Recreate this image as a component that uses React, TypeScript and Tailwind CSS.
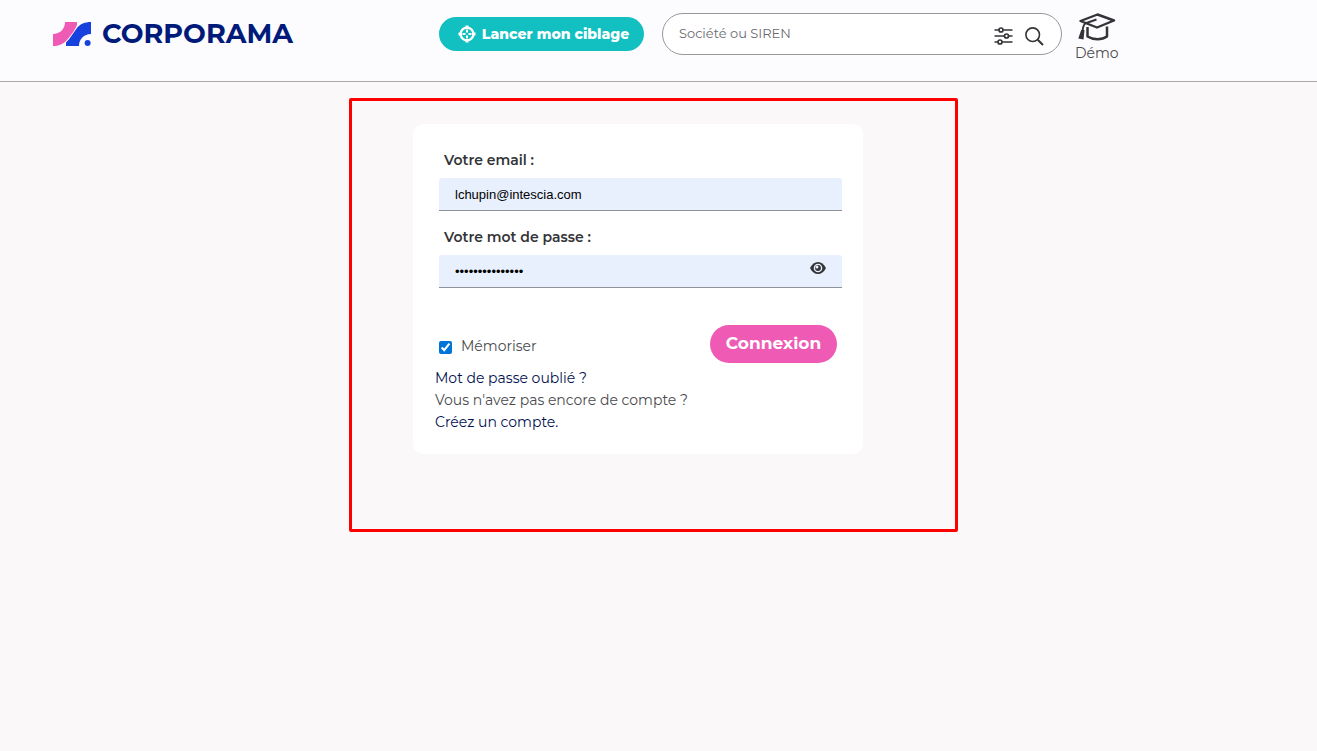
function Logo() {
  return (
    <a href="#" className="flex items-center gap-[11px] text-[27px] leading-8 font-bold text-[#001a7a]">
      <svg width="38" height="24" viewBox="0 0 38 24" aria-hidden="true">
        <path d="M0 12C7 12 12 7 12 0H24V3C22 8 19 12 14 18C10 22 6 24 0 24Z" fill="#ee5ab4" />
        <path d="M13 24V20.5C17 17 20 11 24 6C27 2 32 0 38 0V12C31 12 26 17 26 24Z" fill="#1741dc" />
        <circle cx="34.6" cy="21" r="3" fill="#1741dc" />
      </svg>
      CORPORAMA
    </a>
  );
}

function TargetIcon() {
  return (
    <svg width="18" height="18" viewBox="0 0 18 18" fill="none" stroke="currentColor" aria-hidden="true">
      <circle cx="9" cy="9" r="6.4" strokeWidth="2.4" />
      <path d="M9 0.5V4M9 14V17.5M0.5 9H4M14 9H17.5" strokeWidth="3" />
      <path d="M9 4.5V7.5M9 10.5V13.5M4.5 9H7.5M10.5 9H13.5" strokeWidth="2" />
    </svg>
  );
}

function FiltersIcon() {
  return (
    <svg width="19" height="18" viewBox="0 0 19 18" fill="none" stroke="currentColor" strokeWidth="1.7" aria-hidden="true">
      <path d="M0.5 3H4.7M9.3 3H18.5M0.5 9H10.2M14.8 9H18.5M0.5 15H3.7M8.3 15H18.5" />
      <circle cx="7" cy="3" r="2" />
      <circle cx="12.5" cy="9" r="2" />
      <circle cx="6" cy="15" r="2" />
    </svg>
  );
}

function SearchIcon() {
  return (
    <svg width="19" height="19" viewBox="0 0 19 19" fill="none" stroke="currentColor" aria-hidden="true">
      <circle cx="7.7" cy="7.7" r="6.8" strokeWidth="1.6" />
      <path d="M12.7 12.7L18 18" strokeWidth="2" />
    </svg>
  );
}

function GraduationIcon() {
  return (
    <svg width="38" height="28" viewBox="0 0 38 28" fill="none" stroke="currentColor" aria-hidden="true">
      <path d="M2.5 8L19.5 1.5L36 7.5L19 14.5Z" strokeWidth="2.4" strokeLinejoin="round" />
      <path d="M18.5 6.5L7 10.5C5 13 4.5 17 4.5 20" strokeWidth="2" strokeLinejoin="round" />
      <path d="M3.2 17L0.3 25.5L5.5 26.5L6.5 17Z" fill="currentColor" stroke="none" />
      <path d="M9.5 14V23.5C15 27 24 27 29 23.5V13.5" strokeWidth="2.5" strokeLinejoin="round" />
    </svg>
  );
}

function EyeIcon() {
  return (
    <svg width="16" height="14" viewBox="0 0 16 14" aria-hidden="true">
      <path
        d="M0 7C2 3 4.8 1 8 1S14 3 16 7C14 11 11.2 13 8 13S2 11 0 7Z"
        fill="currentColor"
      />
      <circle cx="8" cy="7" r="3.6" fill="none" stroke="#e8f0fe" strokeWidth="1.4" />
      <circle cx="7" cy="6" r="1.5" fill="#e8f0fe" />
    </svg>
  );
}

function Header() {
  return (
    <header className="flex h-[82px] items-start border-b border-[#aaa9a9] bg-[#fcfcff] pl-[53px]">
      <div className="w-[386px] shrink-0 pt-[18px]">
        <Logo />
      </div>
      <button
        type="button"
        className="mt-[17px] flex h-[34px] w-[205px] shrink-0 items-center justify-center gap-[6px] rounded-full bg-[#12c0c2] pl-1 text-[14px] font-extrabold whitespace-nowrap text-white"
      >
        <TargetIcon />
        Lancer mon ciblage
      </button>
      <form className="mt-[13px] ml-[18px] flex h-[42px] w-[400px] items-center rounded-full border border-[#98989b] bg-white pr-[17px] pl-4">
        <input
          type="search"
          aria-label="Société ou SIREN"
          placeholder="Société ou SIREN"
          className="min-w-0 flex-1 bg-transparent text-[13px] outline-none placeholder:text-[#6b6b6f]"
        />
        <button type="button" aria-label="Filtres" className="mt-1 mr-3">
          <FiltersIcon />
        </button>
        <button type="submit" aria-label="Rechercher" className="mt-1">
          <SearchIcon />
        </button>
      </form>
      <a href="#" className="mt-[13px] ml-[13px] flex flex-col items-center text-[14px] leading-5 text-[#4a4b4e]">
        <span className="text-[#333437]">
          <GraduationIcon />
        </span>
        <span className="mt-[2px]">Démo</span>
      </a>
    </header>
  );
}

function LoginForm() {
  return (
    <form className="w-[450px] rounded-[10px] bg-white pt-[26px] pr-[21px] pb-[21px] pl-[22px] text-[14px]">
      <div className="pl-1">
        <label htmlFor="email" className="block pl-[5px] leading-5 font-semibold">
          Votre email :
        </label>
        <input
          id="email"
          type="email"
          defaultValue="lchupin@intescia.com"
          className="mt-2 block h-[33px] w-full rounded-t-[3px] border-b border-[#8f9299] bg-[#e8f0fe] px-4 font-['Liberation_Sans',sans-serif] text-[13px] text-black outline-none"
        />
        <label htmlFor="password" className="mt-4 block pl-[5px] leading-5 font-semibold">
          Votre mot de passe :
        </label>
        <div className="relative mt-2">
          <input
            id="password"
            type="password"
            defaultValue="motdepasse12345"
            className="block h-[33px] w-full rounded-t-[3px] border-b border-[#8f9299] bg-[#e8f0fe] px-4 font-['Liberation_Sans',sans-serif] text-[13px] text-black outline-none"
          />
          <button type="button" aria-label="Afficher le mot de passe" className="absolute top-[6px] right-4 flex">
            <EyeIcon />
          </button>
        </div>
      </div>
      <div className="mt-[37px] flex items-center justify-between pr-[5px] pl-1">
        <label className="flex items-center gap-[9px] pt-1">
          <input type="checkbox" defaultChecked className="mt-[3px] size-[13px] accent-[#0075d8]" />
          <span className="text-[#4a4b4e]">Mémoriser</span>
        </label>
        <button type="submit" className="h-[38px] w-[127px] rounded-full bg-[#ee5ab4] text-[17px] font-bold text-white">
          Connexion
        </button>
      </div>
      <div className="mt-1 leading-[22px]">
        <a href="#" className="block text-[#03114f]">
          Mot de passe oublié ?
        </a>
        <p className="text-[#4a4b4e]">Vous n'avez pas encore de compte ?</p>
        <a href="#" className="block text-[#03114f]">
          Créez un compte.
        </a>
      </div>
    </form>
  );
}

export default function App() {
  return (
    <div className="min-h-screen bg-[#faf8f9] font-['Montserrat','Inter',sans-serif] text-[#333437]">
      <Header />
      <main className="flex justify-center pt-4 pr-[10px]">
        <section className="w-[609px] rounded-[2px] border-3 border-[#ff0000] pt-[23px] pb-[75px] pl-[61px]">
          <LoginForm />
        </section>
      </main>
    </div>
  );
}
